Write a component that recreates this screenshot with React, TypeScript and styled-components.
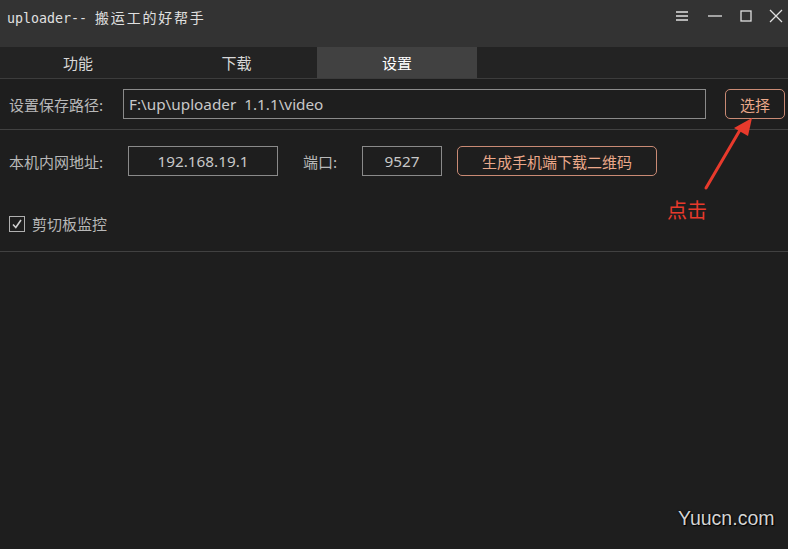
import React from "react";
import styled, { createGlobalStyle } from "styled-components";

const Global = createGlobalStyle`
  html, body { margin: 0; padding: 0; background: #1e1e1e; }
  body { width: 788px; height: 549px; overflow: hidden; font-family: "Noto Sans CJK SC", "Microsoft YaHei", sans-serif; }
`;

const Win = styled.div`
  position: relative;
  width: 788px;
  height: 549px;
  background: #1e1e1e;
  display: flex;
  flex-direction: column;
`;

const TitleBar = styled.div`
  height: 47px;
  background: #333333;
  display: flex;
  align-items: flex-start;
  justify-content: space-between;
  padding: 7px 0 0 7px;
  box-sizing: border-box;
`;

const Title = styled.div`
  font-family: "DejaVu Sans Mono", "Noto Sans CJK SC", monospace;
  font-size: 13.3px;
  color: #e0e0e0;
  white-space: pre;
`;

const TitleCjk = styled.span`
  font-family: "Noto Sans CJK SC", sans-serif;
  font-size: 14px;
  letter-spacing: 1.8px;
`;

const Controls = styled.div`
  display: flex;
  align-items: center;
  margin-top: 1px;
`;

const CtrlBtn = styled.div<{ $w?: number }>`
  width: ${(p) => p.$w ?? 32}px;
  height: 16px;
  display: flex;
  align-items: center;
  justify-content: flex-start;
`;

const Tabs = styled.div`
  height: 31px;
  display: flex;
  background: #232323;
  border-bottom: 1px solid #3c3c3c;
`;

const Tab = styled.div<{ $active?: boolean; $w: number }>`
  width: ${(p) => p.$w}px;
  display: flex;
  align-items: center;
  justify-content: center;
  font-size: 15px;
  padding-right: ${(p) => (p.$active ? 0 : 4)}px;
  box-sizing: border-box;
  color: ${(p) => (p.$active ? "#ffffff" : "#d8d8d8")};
  background: ${(p) => (p.$active ? "#414141" : "transparent")};
`;

const Row = styled.div<{ $h: number; $line?: boolean }>`
  height: ${(p) => p.$h}px;
  box-sizing: border-box;
  display: flex;
  align-items: center;
  padding-left: 9px;
  border-bottom: ${(p) => (p.$line ? "1px solid #414141" : "none")};
`;

const Label = styled.span<{ $w?: number; $ml?: number }>`
  font-size: 15px;
  color: #b8b8b8;
  width: ${(p) => (p.$w ? `${p.$w}px` : "auto")};
  margin-left: ${(p) => p.$ml || 0}px;
  white-space: nowrap;
`;

const Field = styled.div<{ $w: number; $ml: number; $center?: boolean }>`
  width: ${(p) => p.$w}px;
  height: 30px;
  margin-left: ${(p) => p.$ml}px;
  box-sizing: border-box;
  border: 1px solid #8a8a8a;
  display: flex;
  align-items: center;
  justify-content: ${(p) => (p.$center ? "center" : "flex-start")};
  padding-left: ${(p) => (p.$center ? 0 : 5)}px;
  font-family: "Noto Sans", "Open Sans", sans-serif;
  font-size: 15.3px;
  color: #c8c8c8;
  white-space: pre;
`;

const OrangeBtn = styled.div<{ $w: number; $ml: number }>`
  width: ${(p) => p.$w}px;
  height: 30px;
  margin-left: ${(p) => p.$ml}px;
  box-sizing: border-box;
  border: 1px solid #c98a74;
  border-radius: 5px;
  display: flex;
  align-items: center;
  justify-content: center;
  font-size: 15px;
  color: #eba88a;
`;

const CheckRow = styled.div`
  height: 60px;
  box-sizing: border-box;
  border-bottom: 1px solid #414141;
  display: flex;
  align-items: flex-start;
  padding: 21px 0 0 9px;
  gap: 7px;
`;

const Box = styled.div`
  width: 14px;
  height: 14px;
  margin-top: 3px;
  border: 1px solid #b0b0b0;
  display: flex;
  align-items: center;
  justify-content: center;
`;

const Annot = styled.div`
  position: absolute;
  left: 667px;
  top: 195px;
  font-size: 20px;
  color: #e83a2c;
`;

const Arrow = styled.svg`
  position: absolute;
  left: 690px;
  top: 112px;
`;

const Watermark = styled.div`
  position: absolute;
  left: 678px;
  top: 507px;
  font-family: "Liberation Sans", Arial, sans-serif;
  font-size: 19.5px;
  color: #d4d4d4;
  text-shadow: 0 0 2px #000, 1px 1px 1px #000;
`;

export default function App() {
  return (
    <>
      <Global />
      <Win>
        <TitleBar>
          <Title>
            uploader-- <TitleCjk>搬运工的好帮手</TitleCjk>
          </Title>
          <Controls>
            <CtrlBtn>
              <svg width="14" height="12" viewBox="0 0 14 12">
                <path d="M1 2h12M1 6h12M1 10h12" stroke="#e0e0e0" strokeWidth="1.3" />
              </svg>
            </CtrlBtn>
            <CtrlBtn $w={33}>
              <svg width="16" height="12" viewBox="0 0 16 12">
                <path d="M1 6h14" stroke="#e0e0e0" strokeWidth="1.3" />
              </svg>
            </CtrlBtn>
            <CtrlBtn $w={29}>
              <svg width="12" height="12" viewBox="0 0 12 12">
                <rect x="1" y="1" width="10" height="10" fill="none" stroke="#e0e0e0" strokeWidth="1.3" />
              </svg>
            </CtrlBtn>
            <CtrlBtn $w={19}>
              <svg width="14" height="14" viewBox="0 0 14 14">
                <path d="M1 1L13 13M13 1L1 13" stroke="#e0e0e0" strokeWidth="1.3" />
              </svg>
            </CtrlBtn>
          </Controls>
        </TitleBar>
        <Tabs>
          <Tab $w={160}>功能</Tab>
          <Tab $w={157}>下载</Tab>
          <Tab $w={160} $active>设置</Tab>
        </Tabs>
        <Row $h={51} $line>
          <Label $w={94}>设置保存路径:</Label>
          <Field $w={583} $ml={20}>{"F:\\up\\uploader  1.1.1\\video"}</Field>
          <OrangeBtn $w={60} $ml={19}>选择</OrangeBtn>
        </Row>
        <Row $h={62}>
          <Label $w={94}>本机内网地址:</Label>
          <Field $w={150} $ml={25} $center>192.168.19.1</Field>
          <Label $w={34} $ml={25}>端口:</Label>
          <Field $w={80} $ml={25} $center>9527</Field>
          <OrangeBtn $w={200} $ml={15}>生成手机端下载二维码</OrangeBtn>
        </Row>
        <CheckRow>
          <Box>
            <svg width="12" height="12" viewBox="0 0 12 12">
              <path d="M2 6.5L4.8 9.5L10 2" fill="none" stroke="#d0d0d0" strokeWidth="1.6" />
            </svg>
          </Box>
          <Label>剪切板监控</Label>
        </CheckRow>
        <Annot>点击</Annot>
        <Arrow width="80" height="90" viewBox="0 0 80 90">
          <path d="M16 76 L50 18" stroke="#e83a2c" strokeWidth="3" strokeLinecap="round" />
          <path d="M62 6 L44 16 L58 24 Z" fill="#e83a2c" />
        </Arrow>
        <Watermark>Yuucn.com</Watermark>
      </Win>
    </>
  );
}
